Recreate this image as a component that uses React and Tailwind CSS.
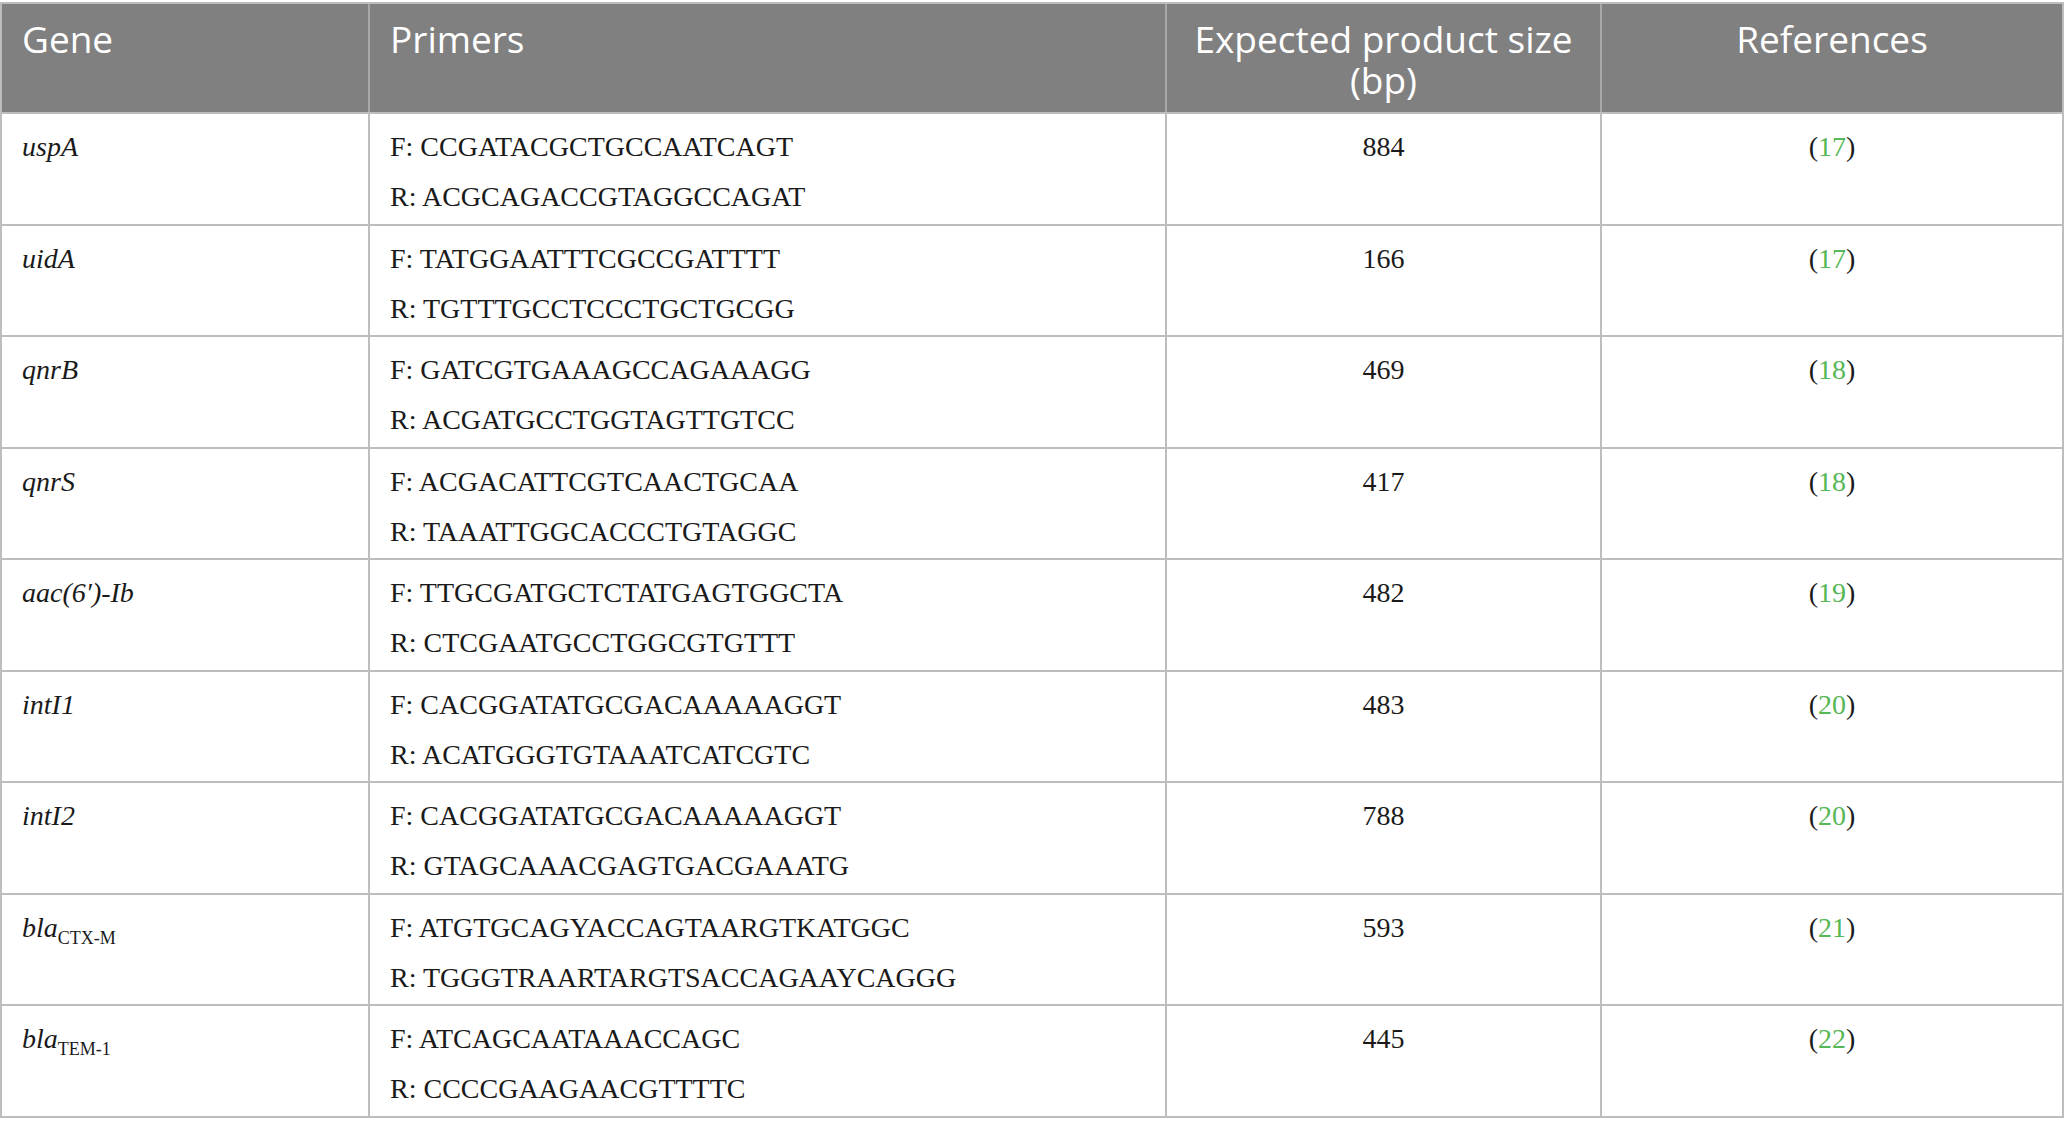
import React from "react";

const rows = [
  { gene: <i>uspA</i>, f: "F: CCGATACGCTGCCAATCAGT", r: "R: ACGCAGACCGTAGGCCAGAT", size: "884", ref: "17" },
  { gene: <i>uidA</i>, f: "F: TATGGAATTTCGCCGATTTT", r: "R: TGTTTGCCTCCCTGCTGCGG", size: "166", ref: "17" },
  { gene: <i>qnrB</i>, f: "F: GATCGTGAAAGCCAGAAAGG", r: "R: ACGATGCCTGGTAGTTGTCC", size: "469", ref: "18" },
  { gene: <i>qnrS</i>, f: "F: ACGACATTCGTCAACTGCAA", r: "R: TAAATTGGCACCCTGTAGGC", size: "417", ref: "18" },
  { gene: <i>aac(6′)-Ib</i>, f: "F: TTGCGATGCTCTATGAGTGGCTA", r: "R: CTCGAATGCCTGGCGTGTTT", size: "482", ref: "19" },
  { gene: <i>intI1</i>, f: "F: CACGGATATGCGACAAAAAGGT", r: "R: ACATGGGTGTAAATCATCGTC", size: "483", ref: "20" },
  { gene: <i>intI2</i>, f: "F: CACGGATATGCGACAAAAAGGT", r: "R: GTAGCAAACGAGTGACGAAATG", size: "788", ref: "20" },
  {
    gene: (
      <span>
        <i>bla</i>
        <span className="relative top-[7px] text-[18px]">CTX-M</span>
      </span>
    ),
    f: "F: ATGTGCAGYACCAGTAARGTKATGGC",
    r: "R: TGGGTRAARTARGTSACCAGAAYCAGGG",
    size: "593",
    ref: "21",
  },
  {
    gene: (
      <span>
        <i>bla</i>
        <span className="relative top-[7px] text-[18px]">TEM-1</span>
      </span>
    ),
    f: "F: ATCAGCAATAAACCAGC",
    r: "R: CCCCGAAGAACGTTTTC",
    size: "445",
    ref: "22",
  },
];

const serif = "font-['Liberation_Serif','Times_New_Roman',serif]";

export default function App() {
  return (
    <div className="w-[2068px] h-[1132px] bg-white">
      <div className="w-[2064px] mt-[2px] border-t-2 border-l-2 border-r-2 border-[#bdbdbd]">
        <div
          className="grid grid-cols-[366px_797px_435px_1fr] bg-[#808080] text-white font-['Open_Sans',sans-serif] text-[37px] leading-[41px] border-b-2 border-[#bdbdbd]"
        >
          <div className="h-[108px] pl-[20px] pt-[14px]">Gene</div>
          <div className="h-[108px] pl-[20px] pt-[14px] border-l-2 border-[#a8a8a8]">Primers</div>
          <div className="h-[108px] pt-[14px] text-center border-l-2 border-[#a8a8a8]">
            Expected product size
            <br />
            (bp)
          </div>
          <div className="h-[108px] pt-[14px] text-center border-l-2 border-[#a8a8a8]">References</div>
        </div>
        {rows.map((row, i) => (
          <div
            key={i}
            className={`grid grid-cols-[366px_797px_435px_1fr] h-[111.5px] border-b-2 border-[#bdbdbd] text-[28px] leading-[50px] text-[#1a1a1a] ${serif}`}
          >
            <div className="pl-[20px] pt-[8px]">{row.gene}</div>
            <div className="pl-[20px] pt-[8px] border-l-2 border-[#bdbdbd]">
              <div>{row.f}</div>
              <div>{row.r}</div>
            </div>
            <div className="pt-[8px] text-center border-l-2 border-[#bdbdbd]">{row.size}</div>
            <div className="pt-[8px] text-center border-l-2 border-[#bdbdbd]">
              (<span className="text-[#55b755]">{row.ref}</span>)
            </div>
          </div>
        ))}
      </div>
    </div>
  );
}
